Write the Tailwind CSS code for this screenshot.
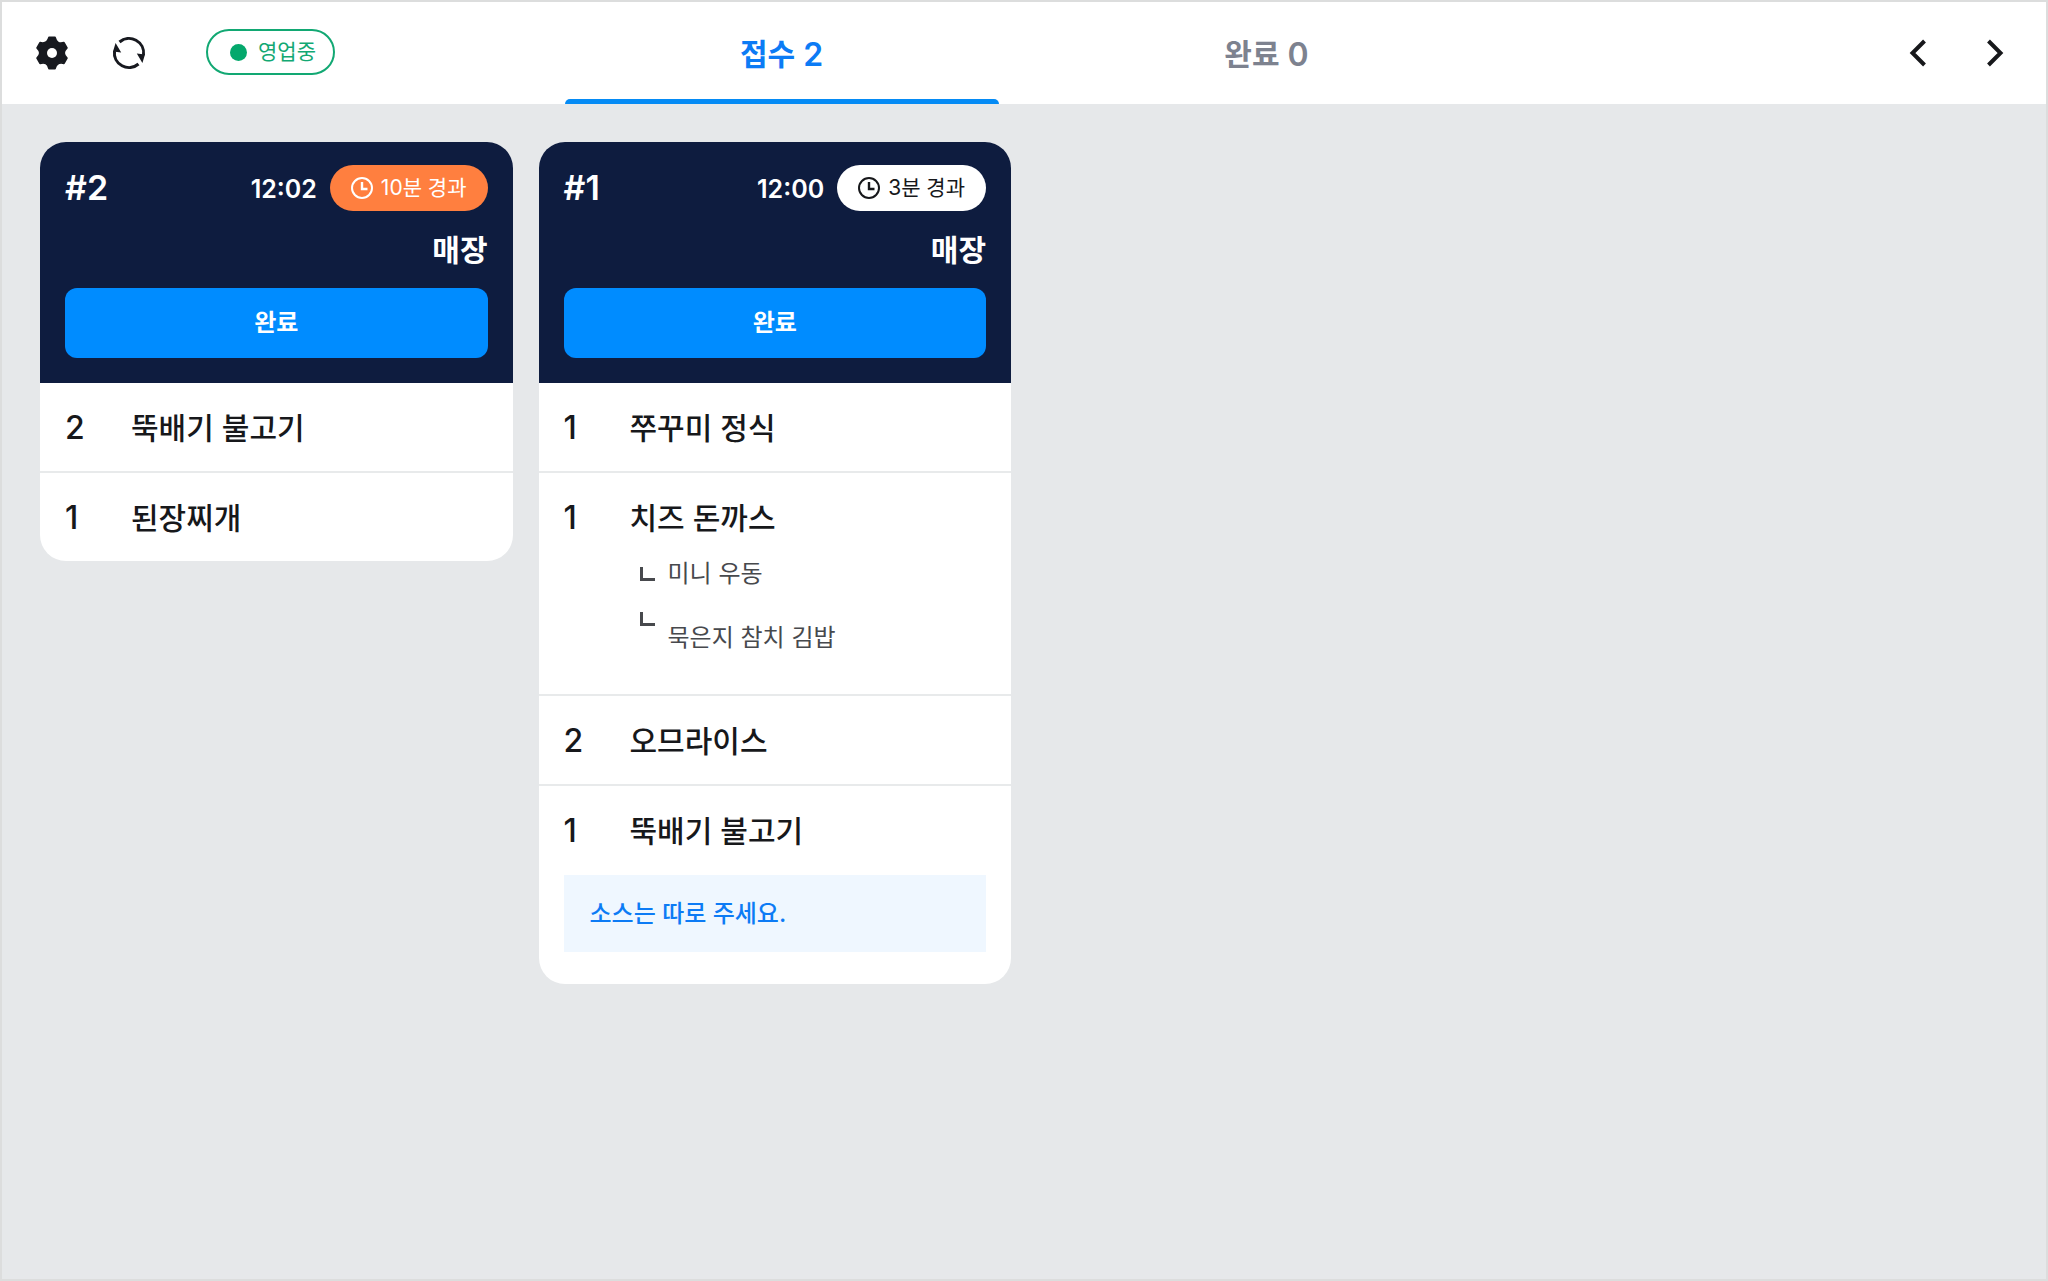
<!DOCTYPE html>
<html lang="ko">
<head>
<meta charset="utf-8">
<meta name="viewport" content="width=device-width, initial-scale=1">
<title>주문 접수</title>
<script src="https://cdn.jsdelivr.net/npm/@tailwindcss/browser@4"></script>
</head>
<body class="flex min-h-screen flex-col border-2 border-[#dcdddd] bg-[#e6e8ea] font-['Inter','Noto_Sans_CJK_KR',sans-serif] text-[#17181b]">
  <header class="grid h-[102px] grid-cols-[1fr_auto_1fr] bg-white">
    <div class="flex items-center pl-[26px]">
      <button type="button" aria-label="설정" class="flex size-12 items-center justify-center">
        <svg class="size-[34px]" viewBox="-17 -17 34 34" fill="#17191f" stroke="#17191f" stroke-width="1.8" stroke-linejoin="round">
          <path d="M-3-15.500H3C4.300-10.500 6.900-9 11.900-10.300L14.900-5.100C11.200-1.400 11.200 1.400 14.900 5.100L11.900 10.300C6.900 9 4.300 10.500 3 15.500H-3C-4.300 10.500-6.900 9-11.900 10.300L-14.900 5.100C-11.200 1.400-11.200-1.400-14.900-5.100L-11.900-10.300C-6.900-9-4.300-10.500-3-15.500Z"/>
          <circle r="5" fill="#fff" stroke="none"/>
        </svg>
      </button>
      <button type="button" aria-label="새로고침" class="ml-[29px] flex size-12 items-center justify-center">
        <svg class="size-[34px]" viewBox="-17 -17 34 34" fill="none" stroke="#17191f" stroke-width="3">
          <path d="M-9.5-11A14.6 14.6 0 0 1 14.5 2"/>
          <path d="M9.5 11A14.6 14.6 0 0 1-14.5-2"/>
          <path d="M7.800.4 16 1.400 13.400 10ZM-7.800-.4-16-1.400-13.400-10Z" fill="#17191f" stroke="none"/>
        </svg>
      </button>
      <button type="button" class="mb-[2px] ml-[53px] flex h-[46px] items-center gap-[11px] rounded-full border-2 border-[#12a873] pr-[17px] pl-[22px] text-[21px] text-[#12a873]">
        <span class="size-[17px] rounded-full bg-[#04a86c]"></span>영업중
      </button>
    </div>
    <nav class="flex gap-[51px] text-[30px] font-semibold" aria-label="주문 상태">
      <a href="#received" aria-current="page" class="flex w-[434px] flex-col text-[#0c7bf5]">
        <span class="flex grow items-center justify-center gap-2 pt-2">접수 <span class="text-[32px]">2</span></span>
        <span class="h-[5px] rounded-t-[5px] bg-[#058bf5]"></span>
      </a>
      <a href="#done" class="flex w-[434px] flex-col pb-[5px] text-[#7d828f]">
        <span class="flex grow items-center justify-center gap-2 pt-2">완료 <span class="text-[32px]">0</span></span>
      </a>
    </nav>
    <div class="flex items-center justify-end gap-[29px] pr-[27px]">
      <button type="button" aria-label="이전" class="flex size-12 items-center justify-center">
        <svg class="h-[30px] w-[20px]" viewBox="0 0 20 30" fill="none" stroke="#17181b" stroke-width="4"><path d="M16.500 3 4.500 15 16.500 27"/></svg>
      </button>
      <button type="button" aria-label="다음" class="flex size-12 items-center justify-center">
        <svg class="h-[30px] w-[20px]" viewBox="0 0 20 30" fill="none" stroke="#17181b" stroke-width="4"><path d="M3.500 3 15.500 15 3.500 27"/></svg>
      </button>
    </div>
  </header>

  <main class="grid grid-cols-4 items-start gap-[26px] px-[38px] py-[38px]">
    <article class="overflow-hidden rounded-[26px] bg-white">
      <header class="bg-[#0e1c3f] px-[25px] pt-[23px] pb-[25px] text-white">
        <div class="flex items-center">
          <h2 class="grow text-[34px] leading-9 font-semibold">#2</h2>
          <time class="pt-[2px] text-[25px] leading-9 font-semibold">12:02</time>
          <span class="ml-[13px] flex h-[46px] items-center gap-2 rounded-full bg-[#ff7f3f] px-[21px] text-[21px]">
            <svg class="size-[22px]" viewBox="0 0 22 22" fill="none" stroke="currentColor" stroke-width="2"><circle cx="11" cy="11" r="10"/><path d="M11 5V12H16.500" stroke-width="2.400"/></svg>
            <span>10분 경과</span>
          </span>
        </div>
        <p class="mt-[21px] text-right text-[30px] leading-9 font-bold">매장</p>
        <button type="button" class="mt-5 h-[70px] w-full rounded-xl bg-[#008cff] text-2xl font-semibold">완료</button>
      </header>
      <ul class="divide-y-2 divide-[#e8eaeb] text-[30px] leading-9 font-medium">
        <li class="flex px-[25px] pt-[27px] pb-[25px]"><span class="w-[66px] text-[32px]">2</span><span>뚝배기 불고기</span></li>
        <li class="flex px-[25px] pt-[27px] pb-[25px]"><span class="w-[66px] text-[32px]">1</span><span>된장찌개</span></li>
      </ul>
    </article>

    <article class="overflow-hidden rounded-[26px] bg-white">
      <header class="bg-[#0e1c3f] px-[25px] pt-[23px] pb-[25px] text-white">
        <div class="flex items-center">
          <h2 class="grow text-[34px] leading-9 font-semibold">#1</h2>
          <time class="pt-[2px] text-[25px] leading-9 font-semibold">12:00</time>
          <span class="ml-[13px] flex h-[46px] items-center gap-2 rounded-full bg-white px-[21px] text-[21px] text-[#17181b]">
            <svg class="size-[22px]" viewBox="0 0 22 22" fill="none" stroke="currentColor" stroke-width="2"><circle cx="11" cy="11" r="10"/><path d="M11 5V12H16.500" stroke-width="2.400"/></svg>
            <span>3분 경과</span>
          </span>
        </div>
        <p class="mt-[21px] text-right text-[30px] leading-9 font-bold">매장</p>
        <button type="button" class="mt-5 h-[70px] w-full rounded-xl bg-[#008cff] text-2xl font-semibold">완료</button>
      </header>
      <ul class="divide-y-2 divide-[#e8eaeb] text-[30px] leading-9 font-medium">
        <li class="flex px-[25px] pt-[27px] pb-[25px]"><span class="w-[66px] text-[32px]">1</span><span>쭈꾸미 정식</span></li>
        <li class="flex px-[25px] pt-[27px] pb-[38px]">
          <span class="w-[66px] text-[32px]">1</span>
          <div>
            <p>치즈 돈까스</p>
            <ul class="mt-5 flex flex-col gap-[9px] pl-[10px] text-2xl leading-9 font-normal text-[#47494d]">
              <li class="flex gap-[13px]"><span class="mt-[11px] h-[14px] w-[15px] border-b-3 border-l-3 border-[#47494d]"></span><span>미니 우동</span></li>
              <li class="flex gap-[13px]"><span class="mt-[11px] h-[14px] w-[15px] border-b-3 border-l-3 border-[#47494d]"></span><span class="pt-[19px]">묵은지 참치 김밥</span></li>
            </ul>
          </div>
        </li>
        <li class="flex px-[25px] pt-[27px] pb-[25px]"><span class="w-[66px] text-[32px]">2</span><span>오므라이스</span></li>
        <li class="px-[25px] pt-[27px] pb-8">
          <div class="flex"><span class="w-[66px] text-[32px]">1</span><span>뚝배기 불고기</span></div>
          <p class="mt-[26px] bg-[#eff7ff] px-[26px] pt-[21px] pb-5 text-2xl leading-9 text-[#0c7bf5]">소스는 따로 주세요.</p>
        </li>
      </ul>
    </article>
  </main>
</body>
</html>
